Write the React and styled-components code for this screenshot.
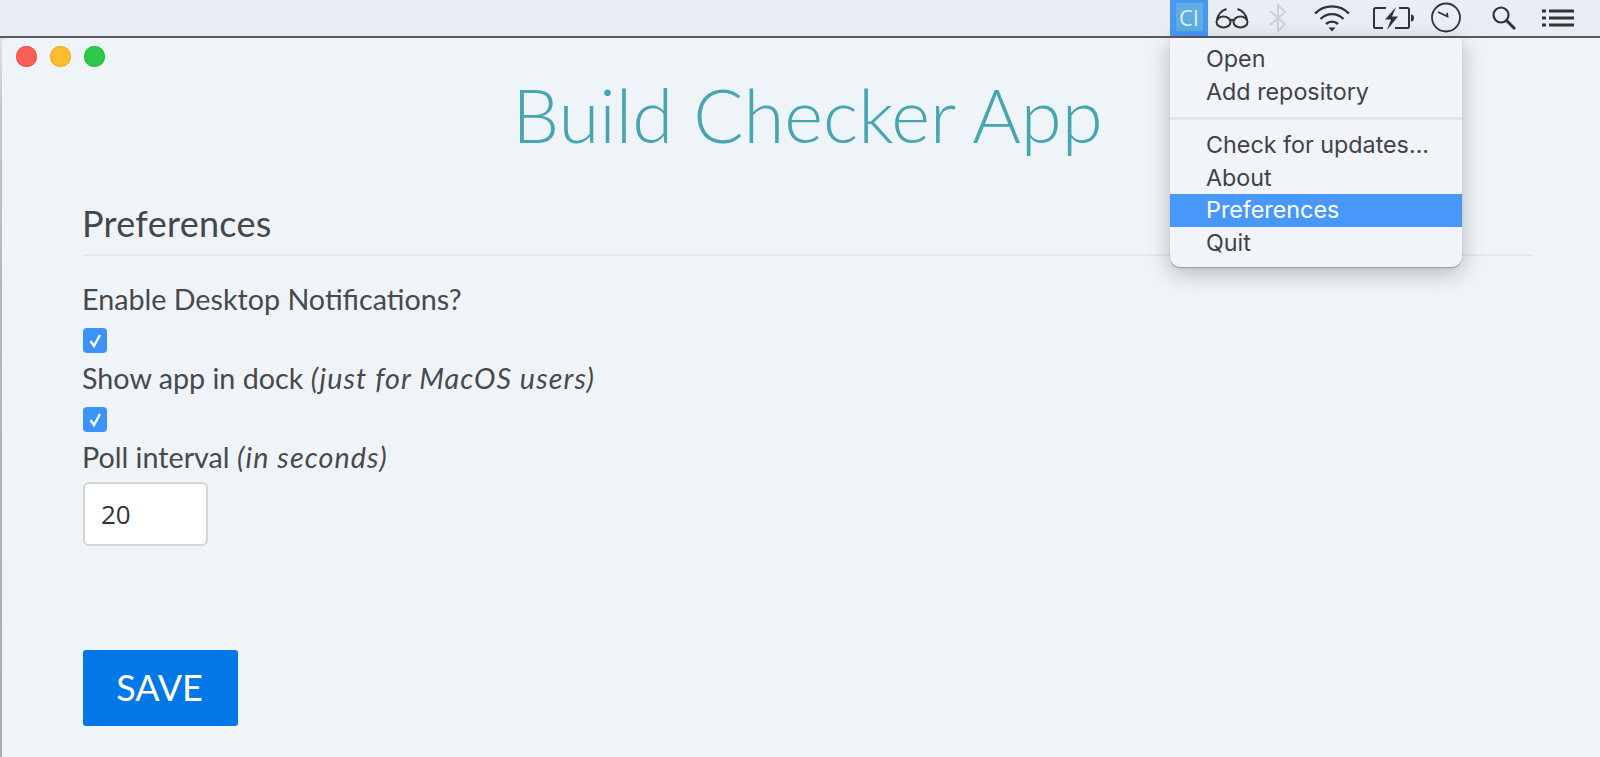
import React from 'react';
import styled, { createGlobalStyle } from 'styled-components';

const Global = createGlobalStyle`
  html, body { margin: 0; padding: 0; height: 100%; background: #e9edf4; overflow: hidden; }
  #root { height: 757px; }
`;

const Screen = styled.div`
  position: relative;
  width: 1600px;
  height: 757px;
  display: flex;
  flex-direction: column;
  font-family: Lato, "Open Sans", sans-serif;
  color: #3a3d40;
  background: linear-gradient(#dfe2e5 40px, #c4c7ca 110px, #b4b8bc 300px, #a9adb2 757px);
`;

const MenuBar = styled.header`
  height: 36px;
  flex: none;
  display: flex;
  justify-content: flex-end;
  background: #e9edf5;
  border-bottom: 2px solid #565a60;
  box-sizing: content-box;
`;

const StatusItem = styled.div`
  width: ${p => p.$w}px;
  margin-left: ${p => p.$ml || 0}px;
  display: flex;
  align-items: center;
  justify-content: center;
  flex: none;
`;

const ActiveItem = styled(StatusItem)`
  background: #4a96f6;
  height: 36px;
  align-items: flex-start;
  padding-top: 3px;
  box-sizing: border-box;
`;

const CiBadge = styled.div`
  width: 27px;
  height: 28px;
  background: #5eaee0;
  color: #dceff9;
  font: 500 22px "Open Sans", sans-serif;
  display: flex;
  align-items: center;
  justify-content: center;
`;

const Window = styled.main`
  flex: 1;
  margin-left: 2px;
  background: #eff4f9;
  border-top-left-radius: 6px;
  padding: 8px 67px 0 14px;
  min-height: 0;
`;

const Lights = styled.div`
  display: flex;
  gap: 13px;
  height: 21px;
`;

const Light = styled.span`
  width: 21px;
  height: 21px;
  border-radius: 50%;
  background: ${p => p.$c};
  box-shadow: inset 0 0 0 1px ${p => p.$b};
`;

const Title = styled.h1`
  margin: 4px 0 0 0;
  height: 88px;
  padding-left: 66px;
  text-align: center;
  font-weight: 300;
  font-size: 74.3px;
  line-height: 88px;
  color: #45a5b1;
`;

const Content = styled.section`
  padding-left: 67px;
`;

const Heading = styled.h2`
  margin: 44px 0 0;
  padding-bottom: 11px;
  font-weight: 400;
  font-size: 36px;
  letter-spacing: 0.3px;
  line-height: 40px;
  border-bottom: 2px solid #e3e7eb;
  color: #44474a;
  text-indent: -1px;
`;

const Label = styled.label`
  display: block;
  font-size: 28.7px;
  font-weight: 400;
  line-height: 40px;
  height: 40px;
  color: #47494c;
  text-indent: -1px;
  em { font-style: italic; letter-spacing: 1.1px; }
`;

const FirstLabel = styled(Label)`
  margin-top: 23px;
`;

const Check = styled.span`
  display: flex;
  align-items: center;
  justify-content: center;
  width: 24px;
  height: 25px;
  margin: 9px 0 5px;
  border-radius: 4px;
  background: #3b93f7;
`;

const NumberBox = styled.input`
  display: block;
  width: 125px;
  height: 64px;
  box-sizing: border-box;
  padding: 0 0 0 16px;
  margin-top: 5px;
  border: 2px solid #d3d5d7;
  border-radius: 6px;
  background: #fff;
  font: 400 26px "Open Sans", sans-serif;
  color: #333;
  outline: none;
`;

const SaveButton = styled.button`
  display: block;
  margin-top: 104px;
  width: 155px;
  height: 76px;
  border: 0;
  border-radius: 3px;
  background: #0277e8;
  color: #fff;
  font: 400 36px Lato, sans-serif;
  padding: 0 2px 2px 0;
`;

const Menu = styled.nav`
  position: absolute;
  top: 38px;
  left: 1170px;
  width: 292px;
  height: 229px;
  box-sizing: border-box;
  padding-top: 5px;
  background: #f1f4f9;
  border-radius: 0 0 10px 10px;
  box-shadow: 0 1px 1px #9a9ca0, 0 6px 22px rgba(0, 0, 0, 0.25);
  font-family: Inter, "Open Sans", sans-serif;
`;

const MenuItem = styled.div`
  height: 32.6px;
  line-height: 32.6px;
  padding-left: 36px;
  font-size: 23.3px;
  color: ${p => (p.$active ? '#fff' : '#414245')};
  background: ${p => (p.$active ? '#4897fb' : 'transparent')};
`;

const MenuSeparator = styled.div`
  height: 3px;
  margin: 9px 0 9px;
  background: #e3e6ea;
`;

const stroke = { fill: 'none', stroke: '#333', strokeWidth: 2 };

const Glasses = () => (
  <svg width="34" height="22" viewBox="0 0 34 22">
    <ellipse cx="8.500" cy="15" rx="7" ry="5.500" {...stroke} />
    <ellipse cx="25.500" cy="15" rx="7" ry="5.500" {...stroke} />
    <path d="M15.500 13.500c1-.8 2-.8 3 0M2 13C3 7 7 3.500 11.500 2M32 13C31 7 27 3.500 22.500 2" {...stroke} />
  </svg>
);

const Bluetooth = () => (
  <svg width="20" height="32" viewBox="0 0 20 32">
    <path d="M2 9 17 22 10 29V3l7 7L2 23" fill="none" stroke="#ced1d6" strokeWidth="2" />
  </svg>
);

const Wifi = () => (
  <svg width="38" height="28" viewBox="0 0 38 28">
    <path d="M2 9.500C11.500 0 26.500 0 36 9.500" {...stroke} strokeWidth="2.400" />
    <path d="M7.500 15C14 8.500 24 8.500 30.500 15" {...stroke} strokeWidth="2.400" />
    <path d="M13 20C16.500 16.800 21.500 16.800 25 20" {...stroke} strokeWidth="2.400" />
    <path d="M15.500 23.500h7L19 27.500z" fill="#333" />
  </svg>
);

const Battery = () => (
  <svg width="42" height="26" viewBox="0 0 42 26">
    <path d="M13 3H2.500a1.500 1.500 0 0 0-1.500 1.500v17A1.500 1.500 0 0 0 2.500 23H10M26 3h8.500A1.500 1.500 0 0 1 36 4.500v17a1.500 1.500 0 0 1-1.500 1.500H22" {...stroke} />
    <path d="M23 2 12 14.500h6L14 25l11-13.500h-6z" fill="#333" />
    <path d="M38 9.500c2 0 3 1.500 3 3.500s-1 3.500-3 3.500z" fill="#333" />
  </svg>
);

const Clock = () => (
  <svg width="32" height="32" viewBox="0 0 32 32">
    <circle cx="16" cy="15.500" r="14" fill="none" stroke="#333" strokeWidth="1.800" />
    <path d="M8 10 17.500 14.500 17 11" fill="none" stroke="#333" strokeWidth="1.800" />
  </svg>
);

const Search = () => (
  <svg width="26" height="26" viewBox="0 0 26 26">
    <circle cx="10" cy="10" r="7.500" {...stroke} strokeWidth="2.200" />
    <path d="M15.500 15.500 24 24" {...stroke} strokeWidth="3" />
  </svg>
);

const List = () => (
  <svg width="32" height="20" viewBox="0 0 32 20">
    <path d="M0 3h4M0 10h4M0 17h4" fill="none" stroke="#333" strokeWidth="3" />
    <path d="M7 3h25M7 10h25M7 17h25" fill="none" stroke="#333" strokeWidth="3" />
  </svg>
);

const Tick = () => (
  <svg width="17" height="17" viewBox="0 0 17 17">
    <path d="M3.500 9 7 14 13 3" fill="none" stroke="#fff" strokeWidth="2.400" />
  </svg>
);

export default function App() {
  return (
    <Screen>
      <Global />
      <MenuBar>
        <ActiveItem $w={38}><CiBadge>CI</CiBadge></ActiveItem>
        <StatusItem $w={34} $ml={7}><Glasses /></StatusItem>
        <StatusItem $w={20} $ml={19}><Bluetooth /></StatusItem>
        <StatusItem $w={38} $ml={25}><Wifi /></StatusItem>
        <StatusItem $w={42} $ml={22}><Battery /></StatusItem>
        <StatusItem $w={32} $ml={15}><Clock /></StatusItem>
        <StatusItem $w={26} $ml={29}><Search /></StatusItem>
        <StatusItem $w={32} $ml={25}><List /></StatusItem>
        <StatusItem $w={26} />
      </MenuBar>
      <Window>
        <Lights>
          <Light $c="#fd5f58" $b="#e9534d" />
          <Light $c="#febc2e" $b="#eca92c" />
          <Light $c="#2ec84a" $b="#2bb944" />
        </Lights>
        <Title>Build Checker App</Title>
        <Content>
          <Heading>Preferences</Heading>
          <FirstLabel>Enable Desktop Notifications?</FirstLabel>
          <Check><Tick /></Check>
          <Label>Show app in dock <em>(just for MacOS users)</em></Label>
          <Check><Tick /></Check>
          <Label>Poll interval <em>(in seconds)</em></Label>
          <NumberBox defaultValue="20" />
          <SaveButton>SAVE</SaveButton>
        </Content>
      </Window>
      <Menu>
        <MenuItem>Open</MenuItem>
        <MenuItem>Add repository</MenuItem>
        <MenuSeparator />
        <MenuItem>Check for updates...</MenuItem>
        <MenuItem>About</MenuItem>
        <MenuItem $active>Preferences</MenuItem>
        <MenuItem>Quit</MenuItem>
      </Menu>
    </Screen>
  );
}
